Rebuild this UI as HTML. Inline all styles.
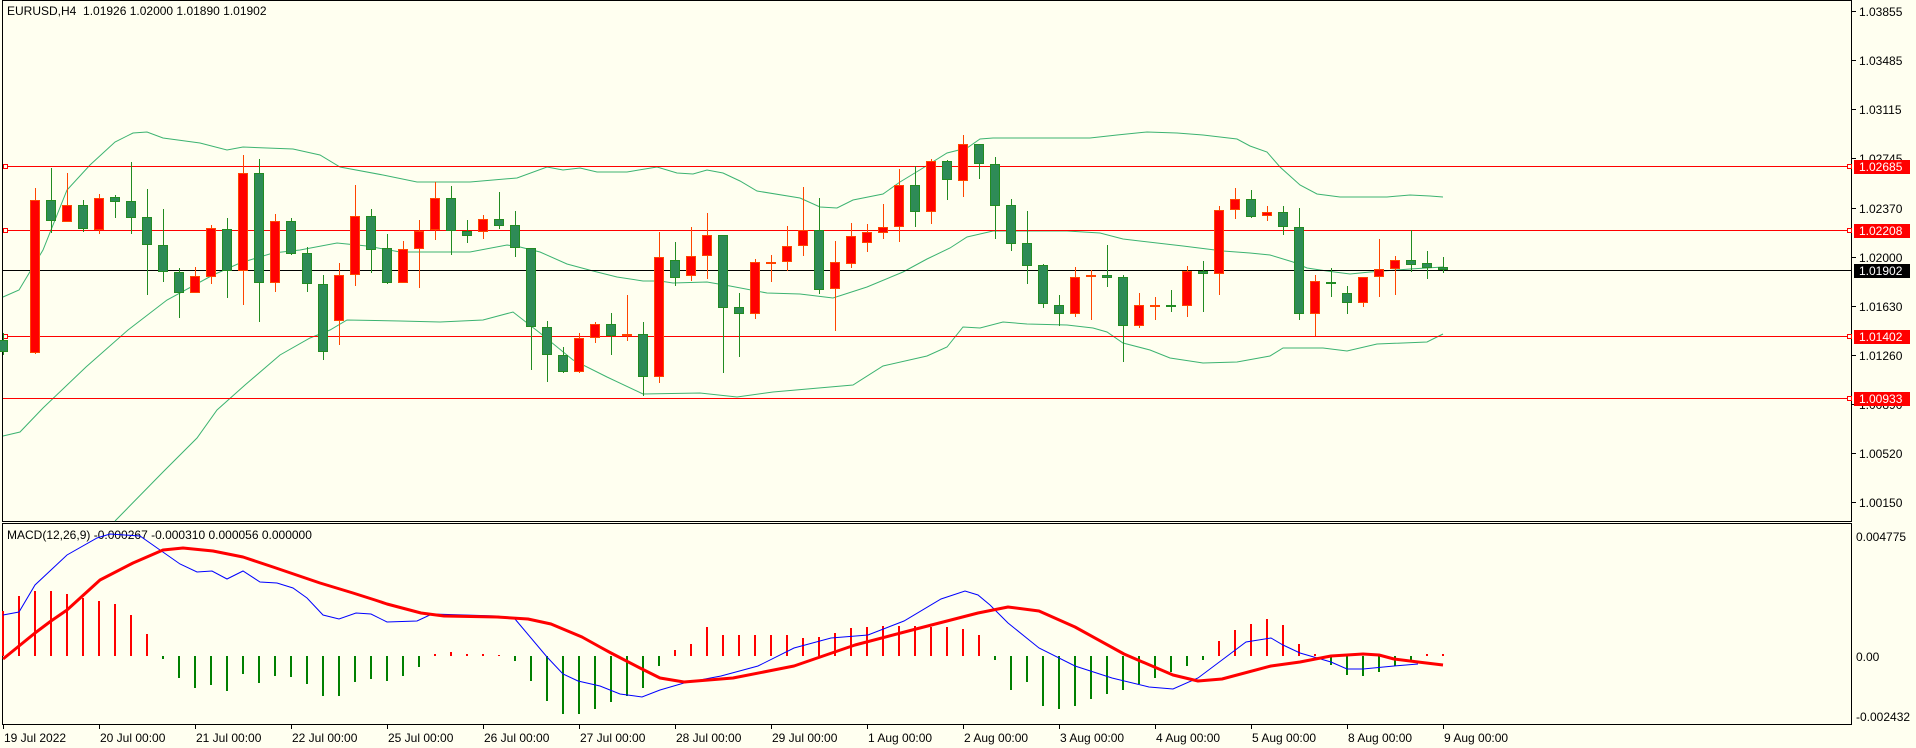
<!DOCTYPE html>
<html><head><meta charset="utf-8"><style>
html,body{margin:0;padding:0;background:#FFFFF0;}
svg{display:block;font-family:"Liberation Sans",Tahoma,sans-serif;font-size:12px;}
</style></head><body>
<svg width="1916" height="748" viewBox="0 0 1916 748" xmlns="http://www.w3.org/2000/svg">
<rect width="1916" height="748" fill="#FFFFF0"/>
<rect x="2.5" y="0.5" width="1849" height="521" fill="none" stroke="#000" stroke-width="1"/>
<rect x="2.5" y="523.5" width="1849" height="201" fill="none" stroke="#000" stroke-width="1"/>
<text x="7" y="15" fill="#000">EURUSD,H4&#160; 1.01926 1.02000 1.01890 1.01902</text>

<g fill="none" stroke="#3CB371" stroke-width="1">
<polyline points="3,297 19,290 43,250 67,190 90,165 115,142 133,133 147,132 163,138 200,143 227,150 243,147 293,149 320,155 340,167 383,175 417,182 470,182 517,178 547,167 563,170 580,168 597,172 627,172 657,167 677,173 693,174 707,170 723,173 740,181 757,191 800,198 820,207 837,208 853,200 883,194 900,182 923,168 947,153 967,148 980,139 993,138 1090,138 1117,135 1147,132 1177,133 1203,135 1237,139 1250,146 1267,152 1280,167 1300,185 1317,194 1340,197 1387,197 1410,195 1430,196 1443,197"/>
<polyline points="3,436 20,432 43,408 86,367 128,330 167,300 213,275 240,263 273,253 300,250 337,243 367,246 400,252 470,252 507,245 520,247 540,252 567,264 593,271 617,277 643,281 660,281 673,283 707,282 730,286 767,293 800,294 833,298 867,287 903,272 927,259 950,248 967,237 993,231 1067,231 1100,233 1123,239 1183,246 1223,251 1250,253 1270,255 1293,262 1307,268 1327,271 1350,274 1370,272 1410,269 1443,267"/>
<polyline points="115,521 163,472 197,438 217,410 245,385 280,355 310,338 330,330 347,320 400,321 440,322 483,320 513,312 540,333 573,360 607,377 643,394 700,393 737,397 773,392 853,385 883,366 927,356 947,347 963,327 980,328 1003,322 1027,324 1067,325 1093,328 1107,332 1123,343 1150,350 1170,358 1203,363 1237,362 1270,356 1283,348 1323,348 1347,351 1377,344 1427,342 1443,334"/>
</g>

<g stroke-width="1">
<line x1="3" y1="166.5" x2="1852" y2="166.5" stroke="#FF0000"/>
<line x1="3" y1="230.5" x2="1852" y2="230.5" stroke="#FF0000"/>
<line x1="3" y1="270.5" x2="1852" y2="270.5" stroke="#000"/>
<line x1="3" y1="336.5" x2="1852" y2="336.5" stroke="#FF0000"/>
<line x1="3" y1="398.5" x2="1852" y2="398.5" stroke="#FF0000"/>
</g>
<g fill="#FFFFF0" stroke="#FF0000" stroke-width="1">
<rect x="3.5" y="164.5" width="4" height="4"/><rect x="3.5" y="228.5" width="4" height="4"/><rect x="3.5" y="334.5" width="4" height="4"/>
<rect x="1847.5" y="164.5" width="4" height="4"/><rect x="1847.5" y="228.5" width="4" height="4"/><rect x="1847.5" y="334.5" width="4" height="4"/><rect x="1847.5" y="396.5" width="4" height="4"/>
</g>

<path fill="none" stroke="#228B22" stroke-width="1" d="M3.5 333V355M51.5 168V233M83.5 200V232M115.5 195V218M131.5 162V234M147.5 189V295M163.5 209V282M179.5 268V318M227.5 218V298M259.5 159V322M291.5 218V255M307.5 247V292M323.5 275V360M371.5 209V273M387.5 234V284M451.5 186V255M467.5 220V243M499.5 192V229M515.5 211V257M531.5 248V370M547.5 321V382M563.5 347V373M611.5 313V355M643.5 322V396M675.5 242V286M723.5 235V373M739.5 293V357M819.5 198V294M915.5 166V227M947.5 160V200M979.5 144V179M995.5 157V239M1011.5 199V251M1027.5 211V284M1043.5 264V308M1059.5 295V326M1107.5 245V287M1123.5 275V362M1171.5 290V312M1203.5 261V312M1251.5 190V218M1283.5 206V235M1299.5 208V320M1331.5 268V297M1347.5 286V314M1411.5 230V272M1427.5 251V279M1443.5 257V273"/>
<path fill="none" stroke="#FF4500" stroke-width="1" d="M35.5 188V354M67.5 173V222M99.5 194V234M195.5 267V293M211.5 225V284M243.5 155V305M275.5 214V292M339.5 263V345M355.5 185V286M403.5 241V283M419.5 220V288M435.5 182V240M483.5 215V239M579.5 333V373M595.5 322V343M627.5 295V341M659.5 232V383M691.5 227V281M707.5 213V279M755.5 259V319M771.5 255V282M787.5 226V271M803.5 187V256M835.5 241V331M851.5 223V268M867.5 224V252M883.5 204V239M899.5 169V242M931.5 159V224M963.5 135V197M1075.5 267V317M1091.5 270V320M1139.5 293V328M1155.5 297V320M1187.5 266V317M1219.5 206V295M1235.5 188V219M1267.5 206V221M1315.5 275V336M1363.5 277V307M1379.5 239V297M1395.5 256V295"/>

<g fill="#2E8B57" stroke="#228B22" stroke-width="1">
<rect x="-1.5" y="340.5" width="9" height="11"/><rect x="46.5" y="200.5" width="9" height="20"/><rect x="78.5" y="205.5" width="9" height="23"/><rect x="110.5" y="197.5" width="9" height="4"/><rect x="126.5" y="201.5" width="9" height="16"/><rect x="142.5" y="217.5" width="9" height="27"/><rect x="158.5" y="245.5" width="9" height="26"/><rect x="174.5" y="272.5" width="9" height="20"/><rect x="222.5" y="229.5" width="9" height="41"/><rect x="254.5" y="173.5" width="9" height="109"/><rect x="286.5" y="221.5" width="9" height="32"/><rect x="302.5" y="253.5" width="9" height="30"/><rect x="318.5" y="284.5" width="9" height="67"/><rect x="366.5" y="216.5" width="9" height="33"/><rect x="382.5" y="248.5" width="9" height="34"/><rect x="446.5" y="198.5" width="9" height="32"/><rect x="462.5" y="231.5" width="9" height="4"/><rect x="494.5" y="219.5" width="9" height="6"/><rect x="510.5" y="225.5" width="9" height="22"/><rect x="526.5" y="248.5" width="9" height="78"/><rect x="542.5" y="327.5" width="9" height="27"/><rect x="558.5" y="355.5" width="9" height="16"/><rect x="606.5" y="324.5" width="9" height="11"/><rect x="638.5" y="334.5" width="9" height="42"/><rect x="670.5" y="260.5" width="9" height="17"/><rect x="718.5" y="235.5" width="9" height="72"/><rect x="734.5" y="307.5" width="9" height="6"/><rect x="814.5" y="230.5" width="9" height="59"/><rect x="910.5" y="185.5" width="9" height="26"/><rect x="942.5" y="161.5" width="9" height="18"/><rect x="974.5" y="144.5" width="9" height="19"/><rect x="990.5" y="164.5" width="9" height="41"/><rect x="1006.5" y="205.5" width="9" height="38"/><rect x="1022.5" y="243.5" width="9" height="22"/><rect x="1038.5" y="265.5" width="9" height="38"/><rect x="1054.5" y="305.5" width="9" height="8"/><rect x="1102.5" y="275.5" width="9" height="2"/><rect x="1118.5" y="277.5" width="9" height="48"/><rect x="1166.5" y="305.5" width="9" height="1"/><rect x="1198.5" y="271.5" width="9" height="2"/><rect x="1246.5" y="199.5" width="9" height="17"/><rect x="1278.5" y="212.5" width="9" height="14"/><rect x="1294.5" y="227.5" width="9" height="86"/><rect x="1326.5" y="282.5" width="9" height="1"/><rect x="1342.5" y="293.5" width="9" height="9"/><rect x="1406.5" y="260.5" width="9" height="4"/><rect x="1422.5" y="263.5" width="9" height="4"/><rect x="1438.5" y="267.5" width="9" height="2"/>
</g>
<g fill="#FF0000" stroke="#FF4500" stroke-width="1">
<rect x="30.5" y="200.5" width="9" height="152"/><rect x="62.5" y="205.5" width="9" height="16"/><rect x="94.5" y="198.5" width="9" height="31"/><rect x="190.5" y="276.5" width="9" height="16"/><rect x="206.5" y="228.5" width="9" height="48"/><rect x="238.5" y="173.5" width="9" height="97"/><rect x="270.5" y="221.5" width="9" height="61"/><rect x="334.5" y="275.5" width="9" height="45"/><rect x="350.5" y="216.5" width="9" height="58"/><rect x="398.5" y="249.5" width="9" height="33"/><rect x="414.5" y="231.5" width="9" height="17"/><rect x="430.5" y="198.5" width="9" height="31"/><rect x="478.5" y="219.5" width="9" height="12"/><rect x="574.5" y="338.5" width="9" height="33"/><rect x="590.5" y="324.5" width="9" height="13"/><rect x="622.5" y="334.5" width="9" height="1"/><rect x="654.5" y="257.5" width="9" height="119"/><rect x="686.5" y="256.5" width="9" height="19"/><rect x="702.5" y="235.5" width="9" height="20"/><rect x="750.5" y="262.5" width="9" height="51"/><rect x="766.5" y="262.5" width="9" height="1"/><rect x="782.5" y="246.5" width="9" height="15"/><rect x="798.5" y="230.5" width="9" height="15"/><rect x="830.5" y="262.5" width="9" height="26"/><rect x="846.5" y="236.5" width="9" height="27"/><rect x="862.5" y="232.5" width="9" height="10"/><rect x="878.5" y="227.5" width="9" height="5"/><rect x="894.5" y="185.5" width="9" height="41"/><rect x="926.5" y="161.5" width="9" height="50"/><rect x="958.5" y="144.5" width="9" height="36"/><rect x="1070.5" y="277.5" width="9" height="36"/><rect x="1086.5" y="275.5" width="9" height="1"/><rect x="1134.5" y="305.5" width="9" height="20"/><rect x="1150.5" y="305.5" width="9" height="1"/><rect x="1182.5" y="271.5" width="9" height="34"/><rect x="1214.5" y="210.5" width="9" height="63"/><rect x="1230.5" y="199.5" width="9" height="10"/><rect x="1262.5" y="212.5" width="9" height="3"/><rect x="1310.5" y="281.5" width="9" height="32"/><rect x="1358.5" y="277.5" width="9" height="25"/><rect x="1374.5" y="269.5" width="9" height="7"/><rect x="1390.5" y="260.5" width="9" height="8"/>
</g>

<g stroke="#000" stroke-width="1">
<line x1="1852" y1="11.5" x2="1856" y2="11.5"/><line x1="1852" y1="60.5" x2="1856" y2="60.5"/><line x1="1852" y1="109.5" x2="1856" y2="109.5"/><line x1="1852" y1="158.5" x2="1856" y2="158.5"/><line x1="1852" y1="208.5" x2="1856" y2="208.5"/><line x1="1852" y1="257.5" x2="1856" y2="257.5"/><line x1="1852" y1="306.5" x2="1856" y2="306.5"/><line x1="1852" y1="355.5" x2="1856" y2="355.5"/><line x1="1852" y1="404.5" x2="1856" y2="404.5"/><line x1="1852" y1="453.5" x2="1856" y2="453.5"/><line x1="1852" y1="502.5" x2="1856" y2="502.5"/>
</g>
<g fill="#000">
<text x="1859" y="16">1.03855</text><text x="1859" y="65">1.03485</text><text x="1859" y="114">1.03115</text><text x="1859" y="163">1.02745</text><text x="1859" y="213">1.02370</text><text x="1859" y="262">1.02000</text><text x="1859" y="311">1.01630</text><text x="1859" y="360">1.01260</text><text x="1859" y="409">1.00890</text><text x="1859" y="458">1.00520</text><text x="1859" y="507">1.00150</text>
</g>
<rect x="1854" y="160" width="56" height="14" fill="#FF0000"/><text x="1859" y="171" fill="#fff">1.02685</text>
<rect x="1854" y="224" width="56" height="14" fill="#FF0000"/><text x="1859" y="235" fill="#fff">1.02208</text>
<rect x="1854" y="264" width="56" height="14" fill="#000"/><text x="1859" y="275" fill="#fff">1.01902</text>
<rect x="1854" y="330" width="56" height="14" fill="#FF0000"/><text x="1859" y="341" fill="#fff">1.01402</text>
<rect x="1854" y="392" width="56" height="14" fill="#FF0000"/><text x="1859" y="403" fill="#fff">1.00933</text>

<text x="7" y="539" fill="#000">MACD(12,26,9) -0.000267 -0.000310 0.000056 0.000000</text>
<path fill="none" stroke="#FF0000" stroke-width="2" d="M3 656V611M19 656V596M35 656V591M51 656V591M67 656V594M83 656V598M99 656V601M115 656V604M131 656V615M147 656V634M435 656V654M451 656V652M467 656V654M483 656V654M499 656V655M675 656V650M691 656V644M707 656V627M723 656V635M739 656V635M755 656V635M771 656V635M787 656V635M803 656V638M819 656V637M835 656V633M851 656V628M867 656V627M883 656V626M899 656V626M915 656V626M931 656V627M947 656V627M963 656V629M979 656V635M1219 656V641M1235 656V630M1251 656V624M1267 656V619M1283 656V625M1299 656V644M1315 656V654M1427 656V654M1443 656V654"/>
<path fill="none" stroke="#008000" stroke-width="2" d="M163 656V659M179 656V678M195 656V688M211 656V685M227 656V691M243 656V674M259 656V683M275 656V676M291 656V677M307 656V684M323 656V696M339 656V696M355 656V682M371 656V679M387 656V681M403 656V676M419 656V667M515 656V661M531 656V681M547 656V701M563 656V714M579 656V714M595 656V709M611 656V702M627 656V696M643 656V688M659 656V666M995 656V660M1011 656V690M1027 656V682M1043 656V706M1059 656V709M1075 656V706M1091 656V699M1107 656V694M1123 656V690M1139 656V684M1155 656V678M1171 656V672M1187 656V666M1203 656V660M1331 656V665M1347 656V675M1363 656V676M1379 656V672M1395 656V666M1411 656V662"/>
<polyline fill="none" stroke="#0000FF" stroke-width="1" points="3,615 19,612 35,585 67,555 97,538 110,534 140,536 160,550 180,564 197,572 212,571 227,579 243,571 260,582 277,583 293,588 307,598 323,615 339,619 356,613 371,614 387,622 417,621 432,614 497,616 515,619 547,657 563,674 578,681 600,686 620,694 642,697 660,690 684,683 721,676 758,666 794,648 831,638 868,635 904,621 941,599 965,591 978,595 990,605 1008,623 1039,648 1075,666 1112,678 1149,687 1173,689 1198,678 1222,660 1246,642 1271,638 1283,645 1300,653 1331,662 1347,669 1363,669 1394,666 1418,664"/>
<polyline fill="none" stroke="#FF0000" stroke-width="3" stroke-linejoin="round" points="3,659 19,646 35,633 51,621 67,610 100,580 133,563 163,550 183,548 213,551 243,557 273,567 320,583 353,593 375,600 387,604 421,613 444,616 497,617 528,619 551,624 582,637 600,647 611,653 640,668 660,678 684,682 733,678 794,666 855,645 916,629 978,613 1008,607 1039,611 1075,627 1124,654 1173,675 1198,681 1222,679 1271,666 1300,662 1331,656 1363,654 1379,655 1394,659 1418,662 1443,665"/>
<g fill="#000">
<text x="1856" y="541">0.004775</text><text x="1856" y="661">0.00</text><text x="1856" y="721">-0.002432</text>
</g>

<g stroke="#000" stroke-width="1">
<line x1="3.5" y1="724" x2="3.5" y2="729"/><line x1="99.5" y1="724" x2="99.5" y2="729"/><line x1="195.5" y1="724" x2="195.5" y2="729"/><line x1="291.5" y1="724" x2="291.5" y2="729"/><line x1="387.5" y1="724" x2="387.5" y2="729"/><line x1="483.5" y1="724" x2="483.5" y2="729"/><line x1="579.5" y1="724" x2="579.5" y2="729"/><line x1="675.5" y1="724" x2="675.5" y2="729"/><line x1="771.5" y1="724" x2="771.5" y2="729"/><line x1="867.5" y1="724" x2="867.5" y2="729"/><line x1="963.5" y1="724" x2="963.5" y2="729"/><line x1="1059.5" y1="724" x2="1059.5" y2="729"/><line x1="1155.5" y1="724" x2="1155.5" y2="729"/><line x1="1251.5" y1="724" x2="1251.5" y2="729"/><line x1="1347.5" y1="724" x2="1347.5" y2="729"/><line x1="1443.5" y1="724" x2="1443.5" y2="729"/>
</g>
<g fill="#000">
<text x="4" y="742">19 Jul 2022</text><text x="100" y="742">20 Jul 00:00</text><text x="196" y="742">21 Jul 00:00</text><text x="292" y="742">22 Jul 00:00</text><text x="388" y="742">25 Jul 00:00</text><text x="484" y="742">26 Jul 00:00</text><text x="580" y="742">27 Jul 00:00</text><text x="676" y="742">28 Jul 00:00</text><text x="772" y="742">29 Jul 00:00</text><text x="868" y="742">1 Aug 00:00</text><text x="964" y="742">2 Aug 00:00</text><text x="1060" y="742">3 Aug 00:00</text><text x="1156" y="742">4 Aug 00:00</text><text x="1252" y="742">5 Aug 00:00</text><text x="1348" y="742">8 Aug 00:00</text><text x="1444" y="742">9 Aug 00:00</text>
</g>
</svg>
</body></html>
